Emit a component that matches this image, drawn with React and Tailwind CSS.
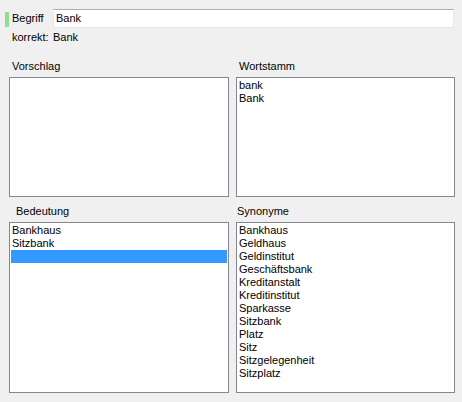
import React from 'react';

const wortstamm = ['bank', 'Bank'];
const bedeutung = ['Bankhaus', 'Sitzbank', ''];
const synonyme = [
  'Bankhaus',
  'Geldhaus',
  'Geldinstitut',
  'Geschäftsbank',
  'Kreditanstalt',
  'Kreditinstitut',
  'Sparkasse',
  'Sitzbank',
  'Platz',
  'Sitz',
  'Sitzgelegenheit',
  'Sitzplatz',
];

// WinForms-style list box
const ListBox = ({ items = [], selected = -1, className = '' }) => (
  <div className={`bg-white border border-[#828790] p-[1px] ${className}`}>
    {items.map((item, i) => (
      <div
        key={i}
        className={`h-[13px] leading-[13px] pl-[1px] whitespace-nowrap ${
          i === selected ? 'bg-[#3399ff] text-white' : 'text-black'
        }`}
      >
        {item}
      </div>
    ))}
  </div>
);

const App = () => {
  return (
    <div className="w-[462px] h-[402px] bg-[#f0f0f0] text-[11px] text-black font-['Liberation_Sans',Arial,sans-serif] overflow-hidden">
      {/* Begriff row */}
      <div className="flex items-center pt-[9px]">
        <div className="ml-[5px] w-[4px] h-[15px] mt-[1px] bg-[#8ee08a]" />
        <span className="ml-[3px] w-[41px] leading-[13px]">Begriff</span>
        <div className="w-[401px] h-[19px] bg-white border border-[#e3e9ef] border-t-[#abadb3] pl-[2px] leading-[17px]">
          Bank
        </div>
      </div>
      <div className="flex mt-[3px] leading-[13px]">
        <span className="ml-[12px] w-[41px]">korrekt:</span>
        <span>Bank</span>
      </div>

      {/* upper lists */}
      <div className="grid grid-cols-[220px_219px] gap-x-[7px] ml-[9px] mt-[16px]">
        <div className="leading-[13px] pl-[3px]">Vorschlag</div>
        <div className="leading-[13px] pl-[3px]">Wortstamm</div>
        <ListBox className="h-[120px] mt-[4px]" />
        <ListBox className="h-[120px] mt-[4px]" items={wortstamm} />
      </div>

      {/* lower lists */}
      <div className="grid grid-cols-[220px_219px] gap-x-[7px] ml-[9px] mt-[8px]">
        <div className="leading-[13px] pl-[7px]">Bedeutung</div>
        <div className="leading-[13px] pl-[1px]">Synonyme</div>
        <ListBox className="h-[171px] mt-[4px]" items={bedeutung} selected={2} />
        <ListBox className="h-[171px] mt-[4px]" items={synonyme} />
      </div>
    </div>
  );
};

export default App;
